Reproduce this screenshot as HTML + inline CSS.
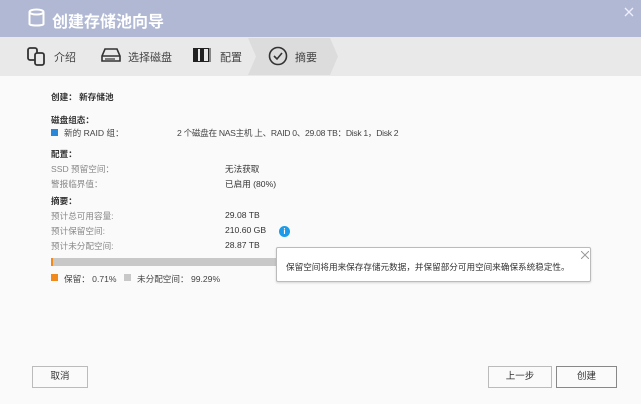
<!DOCTYPE html>
<html><head><meta charset="utf-8"><style>
*{margin:0;padding:0;box-sizing:border-box}
body{width:641px;height:404px;background:#fafafa;font-family:"Liberation Sans","Noto Sans CJK SC",sans-serif;position:relative;overflow:hidden;color:#333}
.hd{position:absolute;left:0;top:0;width:641px;height:37px;background:#b0b8d3}
.hd .t{position:absolute;left:52px;top:8px;color:#fff;font-size:16px;font-weight:bold}
.st{position:absolute;left:0;top:37px;width:641px;height:39px;background:#e9e9e9}
.s{position:absolute;top:12px;font-size:11px;color:#444}
.a{position:absolute;font-size:8.6px;white-space:nowrap}
.g{color:#888}.b{font-weight:bold;color:#333}
.btn{position:absolute;top:366px;height:22px;border:1px solid #bbb;background:#fafafa;font-size:9.5px;text-align:center;line-height:20px;color:#333}
</style></head><body>
<div class="hd">
<svg style="position:absolute;left:28px;top:8px" width="17" height="20" viewBox="0 0 17 20"><path d="M1.5 4v12c0 2 14 2 14 0V4" fill="none" stroke="#fff" stroke-width="2"/><ellipse cx="8.5" cy="4" rx="7" ry="2.5" fill="none" stroke="#fff" stroke-width="2"/></svg>
<div class="t">创建存储池向导</div>
<svg style="position:absolute;left:624px;top:7px" width="10" height="10"><path d="M1 1L9 9M9 1L1 9" stroke="#eef" stroke-width="1.4"/></svg>
</div>
<div class="st">
<svg style="position:absolute;left:0;top:0" width="641" height="39"><polygon points="248,1 330,1 338,19.5 330,38 248,38 256,19.5" fill="#dcdcdc"/></svg>
<svg style="position:absolute;left:26px;top:8px" width="22" height="22" viewBox="0 0 22 22"><rect x="2" y="3" width="9" height="12" rx="2" fill="none" stroke="#333" stroke-width="1.8"/><rect x="9" y="8" width="9" height="12" rx="2" fill="#e9e9e9" stroke="#333" stroke-width="1.8"/></svg>
<div class="s" style="left:54px">介绍</div>
<svg style="position:absolute;left:101px;top:10px" width="20" height="16" viewBox="0 0 20 16"><path d="M4 2h12l3 7v5H1V9z" fill="none" stroke="#333" stroke-width="1.6"/><path d="M1 9h18" stroke="#333" stroke-width="1.4"/><path d="M4 12h10" stroke="#333" stroke-width="1.2"/></svg>
<div class="s" style="left:128px">选择磁盘</div>
<svg style="position:absolute;left:193px;top:11px" width="18" height="14"><rect x="0.5" y="0.5" width="15" height="13" fill="none" stroke="#222"/><rect x="1" y="1" width="4" height="12" fill="#222"/><rect x="7" y="1" width="4" height="12" fill="#222"/><path d="M17 0v14" stroke="#222"/></svg>
<div class="s" style="left:220px">配置</div>
<svg style="position:absolute;left:268px;top:9px" width="20" height="20"><circle cx="10" cy="10" r="8.5" fill="none" stroke="#333" stroke-width="1.6"/><path d="M6 10l3 3 5-6" fill="none" stroke="#333" stroke-width="1.6"/></svg>
<div class="s" style="left:295px">摘要</div>
</div>

<div class="a b" style="left:51px;top:91px">创建： 新存储池</div>
<div class="a b" style="left:51px;top:114px">磁盘组态：</div>
<div style="position:absolute;left:51px;top:129px;width:7px;height:7px;background:#2a86d8"></div>
<div class="a" style="left:64px;top:127px;color:#444">新的 RAID 组：</div>
<div class="a" style="left:177px;top:127px;color:#444;letter-spacing:-0.3px">2 个磁盘在 NAS主机 上、RAID 0、29.08 TB：Disk 1，Disk 2</div>
<div class="a b" style="left:51px;top:148px">配置：</div>
<div class="a g" style="left:51px;top:163px">SSD 预留空间：</div>
<div class="a" style="left:225px;top:163px">无法获取</div>
<div class="a g" style="left:51px;top:178px">警报临界值：</div>
<div class="a" style="left:225px;top:178px">已启用 (80%)</div>
<div class="a b" style="left:51px;top:195px">摘要：</div>
<div class="a g" style="left:51px;top:210px">预计总可用容量:</div>
<div class="a" style="left:225px;top:210px">29.08 TB</div>
<div class="a g" style="left:51px;top:225px">预计保留空间:</div>
<div class="a" style="left:225px;top:225px">210.60 GB</div>
<div style="position:absolute;left:279px;top:226px;width:11px;height:11px;border-radius:50%;background:#1d9be8;color:#fff;font-size:8px;font-weight:bold;text-align:center;line-height:11px">i</div>
<div class="a g" style="left:51px;top:240px">预计未分配空间:</div>
<div class="a" style="left:225px;top:240px">28.87 TB</div>
<div style="position:absolute;left:51px;top:258px;width:230px;height:8px;background:#c8c8c8"></div>
<div style="position:absolute;left:51px;top:258px;width:2px;height:8px;background:#f08a1c"></div>
<div style="position:absolute;left:51px;top:274px;width:7px;height:7px;background:#f08a1c"></div>
<div class="a" style="left:64px;top:273px;color:#444">保留： 0.71%</div>
<div style="position:absolute;left:124px;top:274px;width:7px;height:7px;background:#c8c8c8"></div>
<div class="a" style="left:137px;top:273px;color:#444">未分配空间： 99.29%</div>

<div style="position:absolute;left:276px;top:247px;width:315px;height:35px;background:#fff;border:1px solid #bbb;border-radius:2px;box-shadow:0 1px 2px rgba(0,0,0,.15)">
<div class="a" style="left:9px;top:13px;color:#333">保留空间将用来保存存储元数据，并保留部分可用空间来确保系统稳定性。</div>
<svg style="position:absolute;left:304px;top:3px" width="8" height="8"><path d="M0 0L8 8M8 0L0 8" stroke="#999"/></svg>
</div>

<div class="btn" style="left:32px;width:56px">取消</div>
<div class="btn" style="left:488px;width:64px">上一步</div>
<div class="btn" style="left:556px;width:61px;border-color:#888">创建</div>
</body></html>
